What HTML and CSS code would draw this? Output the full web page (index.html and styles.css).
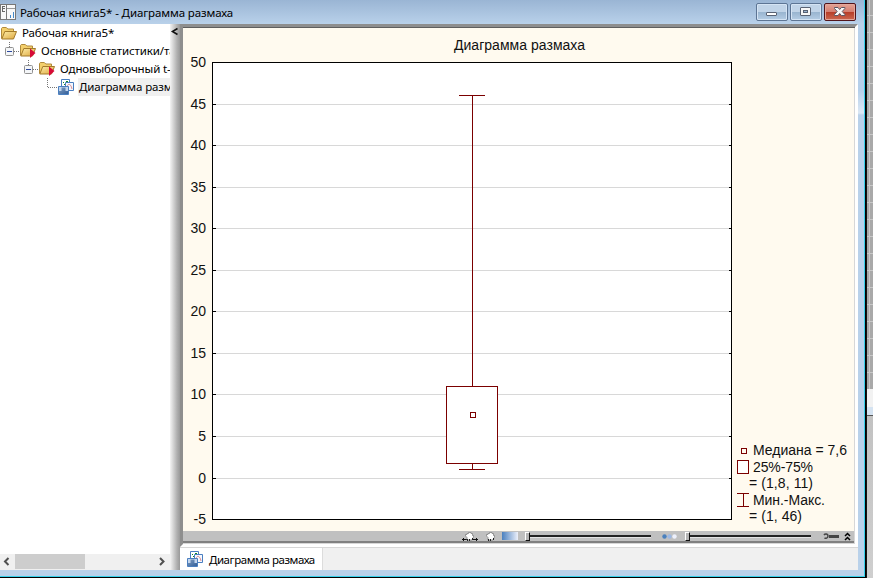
FILE: index.html
```
<!DOCTYPE html>
<html lang="ru">
<head>
<meta charset="utf-8">
<title>Рабочая книга5* - Диаграмма размаха</title>
<link rel="stylesheet" href="styles.css">
</head>
<body>
<svg class="defs" width="0" height="0">
  <defs>
    <linearGradient id="gold" x1="0" y1="0" x2="1" y2="1"><stop offset="0" stop-color="#fdeeaa"/><stop offset="1" stop-color="#dda63c"/></linearGradient>
    <linearGradient id="person" x1="0" y1="0" x2="1" y2="1"><stop offset="0" stop-color="#7f9cc0"/><stop offset="1" stop-color="#34619b"/></linearGradient>
    <symbol id="folder" viewBox="0 0 16 13">
      <path d="M.5 11.500V1.500l.8-1h4l1.500 1.500h5.700v3.500" fill="#f3cf6c" stroke="#b08a3c"/>
      <path d="M.8 12L3.800 4.500H15.500L12.500 12z" fill="url(#gold)" stroke="#a37a2a"/>
    </symbol>
    <symbol id="graph" viewBox="0 0 16 16">
      <path d="M3.500.500h8v8h-8z" fill="#fff" stroke="#4a7fc0"/>
      <path d="M5 3h1v1H5zM8 2h1v1H8zM6 5h1v1H6zM9 2h1v1H9zM7 4h1v1H7z" fill="#108a24"/>
      <path d="M7.500 3.500h8v8h-8z" fill="#f5f8ff" stroke="#4a7fc0"/>
      <path d="M9 9c0-5 4-5 5 1" fill="none" stroke="#d98c92"/>
      <path d="M.5 7.500h10v8H.5z" fill="#c3d6ee" stroke="#4a7fc0"/>
      <path d="M1 15v-3h2.500V8.500h4V12H10v3z" fill="url(#person)"/>
    </symbol>
    <symbol id="hand" viewBox="0 0 9 9">
      <path d="M2 8V5.500L.5 4V2.500H2V1.500h1.500V.5H6v1h1.500v2h1V5L7 8z" fill="#fff" stroke="#777" stroke-width=".7"/>
      <path d="M2 7h1v2H2zM4 7h1v2H4zM7 6h1v2H7z" fill="#222"/>
    </symbol>
    <symbol id="expander" viewBox="0 0 18 18">
      <path d="M5.500 0v5M10 9.500h8" stroke="#777" stroke-dasharray="1 1"/>
      <rect x="1.500" y="5.500" width="8" height="8" rx="1" fill="#f4f6f8" stroke="#919191"/>
      <path d="M3 9.500h5" stroke="#2d49a0"/>
    </symbol>
    <symbol id="opened" viewBox="0 0 16 16">
      <use href="#folder" width="16" height="13" y="1"/>
      <path d="M10 5.500l5.500 4.500L10 15z" fill="#d70a37"/>
    </symbol>
  </defs>
</svg>
<div class="desktop">
  <div class="window">
    <header class="titlebar">
      <svg class="app-icon" width="16" height="17" viewBox="0 0 16 17" shape-rendering="crispEdges">
        <path d="M.5.500h6v15h-6zM6.500.5h9v15h-9z" fill="#f8f8f8" stroke="#777"/>
        <path d="M2.500 2v6M2 2.500h3M2 4.500h3M2 7.500h3" stroke="#666"/><path d="M7 4.500h8" stroke="#999"/>
        <path d="M10.500 11v3M13.500 8v6" stroke="#4589c8"/>
      </svg>
      <span class="title">Рабочая книга5* - Диаграмма размаха</span>
      <div class="controls">
        <button class="ctl"><svg width="30" height="16" viewBox="0 0 30 16"><rect x="9.500" y="8.500" width="10" height="3" rx=".5" fill="#fff" stroke="#596273"/></svg></button>
        <button class="ctl"><svg width="30" height="16" viewBox="0 0 30 16"><rect x="9.500" y="3.500" width="10" height="8" rx=".5" fill="#f7f7f7" stroke="#596273"/><rect x="12.500" y="6.500" width="4" height="2" fill="#9ab5d2" stroke="#596273"/></svg></button>
        <button class="ctl close"><svg width="30" height="16" viewBox="0 0 30 16"><path d="M9.500 3.500h3.500l1.700 2 1.700-2h3.500v1l-2.700 3 2.700 3v1h-3.500l-1.700-2-1.700 2H9.500v-1l2.700-3-2.700-3z" fill="#f8f8f8" stroke="#5b5864"/></svg></button>
      </div>
    </header>
    <div class="body">
      <aside class="sidebar">
        <div class="tree">
          <div class="row"><svg class="ic" width="16" height="13"><use href="#folder"/></svg><span class="label">Рабочая книга5*</span></div>
          <div class="row l1"><svg width="18" height="18"><use href="#expander"/></svg><svg class="ic" width="16" height="16"><use href="#opened"/></svg><span class="label">Основные статистики/таблицы</span></div>
          <div class="row l2"><svg width="18" height="18"><use href="#expander"/></svg><svg class="ic" width="16" height="16"><use href="#opened"/></svg><span class="label">Одновыборочный t-критерий</span></div>
          <div class="row l3"><svg width="18" height="18" viewBox="0 0 18 18"><path d="M5.500 0v10M6 9.500h10" fill="none" stroke="#777" stroke-dasharray="1 1"/></svg><svg class="ic" width="16" height="16"><use href="#graph"/></svg><span class="label selected">Диаграмма размаха</span></div>
        </div>
        <div class="scroll">
          <svg width="15" height="15" viewBox="0 0 15 15"><path d="M8.500 4L5 7.500 8.500 11" fill="none" stroke="#505050" stroke-width="2"/></svg>
          <div class="thumb"></div>
          <svg class="next" width="15" height="15" viewBox="0 0 15 15"><path d="M5 4l3.500 3.500L5 11" fill="none" stroke="#505050" stroke-width="2"/></svg>
        </div>
      </aside>
      <div class="splitter"><svg width="10" height="14" viewBox="0 0 10 14"><path d="M7.500 4.500L2.500 7.500 7.500 10.500" fill="none" stroke="#111" stroke-width="1.600"/></svg></div>
      <main class="main">
        <section class="graph">
          <svg class="chart" width="671" height="503" viewBox="183 28 671 503" shape-rendering="crispEdges">
            <rect x="212.500" y="62.500" width="519" height="457" fill="#fff" stroke="#000"/>
            <path d="M216 104.500h513M216 145.500h513M216 187.500h513M216 228.500h513M216 270.500h513M216 311.500h513M216 353.500h513M216 394.500h513M216 436.500h513M216 478.500h513" stroke="#d8d8d8"/>
            <path d="M213 104.500h3M213 145.500h3M213 187.500h3M213 228.500h3M213 270.500h3M213 311.500h3M213 353.500h3M213 394.500h3M213 436.500h3M213 478.500h3M729 104.500h3M729 145.500h3M729 187.500h3M729 228.500h3M729 270.500h3M729 311.500h3M729 353.500h3M729 394.500h3M729 436.500h3M729 478.500h3" stroke="#000"/>
            <g fill="none" stroke="#7b0000">
              <path d="M459 95.500h26M472.500 95v291M472.500 463v6M459 469.500h26"/>
              <rect x="446.500" y="386.500" width="51" height="77" fill="#fff"/>
              <rect x="470.500" y="412.500" width="5" height="5" fill="#fff"/>
              <rect x="741.500" y="448.500" width="5" height="5"/>
              <rect x="737.500" y="460.500" width="11" height="13" fill="#fff"/>
              <path d="M737 493.500h12M743.500 493v13M737 506.500h12"/>
            </g>
            <text class="t" x="454" y="50" textLength="131">Диаграмма размаха</text>
            <g class="t axis">
              <text x="206" y="67">50</text><text x="206" y="109">45</text><text x="206" y="150">40</text><text x="206" y="192">35</text><text x="206" y="233">30</text><text x="206" y="275">25</text><text x="206" y="316">20</text><text x="206" y="358">15</text><text x="206" y="399">10</text><text x="206" y="441">5</text><text x="206" y="483">0</text><text x="206" y="524">-5</text>
            </g>
            <g class="t">
              <text x="753" y="455" textLength="94">Медиана = 7,6</text>
              <text x="753" y="472" textLength="60">25%-75%</text>
              <text x="749" y="488" textLength="64">= (1,8, 11)</text>
              <text x="753" y="505" textLength="72">Мин.-Макс.</text>
              <text x="749" y="521" textLength="53">= (1, 46)</text>
            </g>
          </svg>
          <div class="tools">
            <svg class="pan" width="16" height="9" viewBox="0 0 16 9"><path d="M0 7.500h5M11 7.500h5M1.500 6v3M14.500 6v3" stroke="#111"/><use href="#hand" x="3" width="9" height="9"/></svg>
            <svg class="grab" width="9" height="9"><use href="#hand"/></svg>
            <div class="ramp"></div>
            <div class="slider"><i></i></div>
            <svg class="dots" width="15" height="5" viewBox="0 0 15 5"><circle cx="2.500" cy="2.500" r="2.200" fill="#4a80bd"/><circle cx="7.500" cy="2.500" r="2.200" fill="#9cb8e4"/><circle cx="12.500" cy="2.500" r="2.200" fill="#edf0fb"/></svg>
            <div class="slider"><i></i></div>
            <svg class="wrench" width="17" height="7" viewBox="0 0 17 7"><path d="M1 2c1-1.500 4-1.500 4 1S2.500 5.500 1.500 5" fill="none" stroke="#444" stroke-width="1.500"/><path d="M6 3.500h10" stroke="#444" stroke-width="3"/></svg>
            <svg class="up" width="7" height="9" viewBox="0 0 7 9"><path d="M1 4l2.500-2.500L6 4M1 8l2.500-2.500L6 8" fill="none" stroke="#000" stroke-width="1.500"/></svg>
          </div>
        </section>
        <nav class="tabs"><div class="tab"><svg width="16" height="16"><use href="#graph"/></svg><span>Диаграмма размаха</span></div></nav>
      </main>
    </div>
  </div>
  <div class="outside"><div class="cells"></div><div class="band"></div><div class="rest"></div></div>
</div>
</body>
</html>
```
FILE: styles.css
```
* { box-sizing: border-box; }
body { margin: 0; overflow: hidden; font-family: "Noto Sans", sans-serif; font-size: 12px; color: #000; }
svg { display: block; flex: none; }
.defs { height: 0; }
.desktop { display: flex; width: 873px; height: 578px; }
.window { display: flex; flex-direction: column; width: 866px; height: 578px; background: linear-gradient(#9ab5d4, #b9d1ea 24px, #b5cfea 90px, #dce8f5 113px, #b9d1ea 115px); border-right: 1px solid #000; border-bottom: 1px solid #000; box-shadow: inset -1px -1px #35d0ea; }
.titlebar { display: flex; height: 24px; align-items: flex-start; background: linear-gradient(#9ab5d4, #b9d1ea); margin-right: 1px; }
.app-icon { margin-top: 4px; }
.title { margin-left: 4px; line-height: 26px; white-space: nowrap; font-size: 11.5px; letter-spacing: -.12px; }
.controls { display: flex; gap: 2px; margin: 3px 8px 0 auto; }
.ctl { width: 32px; height: 18px; padding: 0; border: 1px solid #5d7594; border-radius: 2px; background: linear-gradient(#c1d4e8 0 48%, #98b4cf 50%, #b5cde5); box-shadow: inset 0 0 0 1px #d5e4f4; }
.ctl.close { border-color: #51141b; background: linear-gradient(#e4a396, #d57e70 48%, #b63c27 50%, #cc6850); box-shadow: inset 0 0 0 1px #e3a79b; }
.body { display: flex; height: 546px; width: 858px; }
.sidebar { display: flex; flex-direction: column; width: 170px; background: #fff; overflow: hidden; }
.tree { flex: 1; font-size: 11.5px; letter-spacing: -.12px; }
.row { display: flex; align-items: center; height: 18px; white-space: nowrap; }
.row .ic { margin-left: 1px; }
.l1 { padding-left: 4px; }
.l2 { padding-left: 23px; }
.l3 { padding-left: 42px; }
.l1 .ic, .l2 .ic, .l3 .ic { margin-left: -2px; }
.label { margin-left: 5px; line-height: 18px; }
.selected { background: #f0f0f0; padding-left: 1px; margin-left: 4px; }
.scroll { display: flex; height: 16px; background: #f0f0f0; }
.thumb { width: 70px; height: 15px; background: #cdcdcd; }
.scroll .next { margin-left: auto; }
.splitter { width: 10px; background: linear-gradient(90deg, #f4f4f4, #b0b0b0 70%, #999); }
.main { display: flex; flex-direction: column; width: 678px; background: #f0f0f0; }
.graph { width: 678px; height: 523px; padding: 1px 1px 1px 0; border-style: solid; border-width: 3px 3px 3px 3px; border-color: #8e8e8e #fff #fff #8e8e8e; background: #fffaef; box-shadow: inset 0 1px #5f5f5f, inset -1px -1px #d7d7d7; }
.t { font-family: "Liberation Sans", Arial, sans-serif; font-size: 14px; fill: #111; }
.axis { text-anchor: end; }
.tools { display: flex; align-items: center; height: 12px; border-bottom: 2px solid #808080; background: #c0c0c0; }
.pan { margin-left: 279px; }
.grab { margin-left: 8px; }
.ramp { width: 16px; height: 8px; margin-left: 7px; background: linear-gradient(90deg, #4a80bf, #edf0fa); }
.slider { display: flex; align-items: center; width: 126px; height: 10px; margin-left: 7px; background: linear-gradient(transparent 4px, #222 4px 6px, #e4e4e4 6px 7px, transparent 7px); }
.slider i { width: 5px; height: 9px; background: #b4b4b4; border: 1px solid; border-color: #fff #111 #111 #fff; }
.dots { margin-left: 11px; }
.dots + .slider { margin-left: 8px; }
.wrench { margin-left: 12px; }
.up { margin-left: 4px; }
.tabs { display: flex; height: 23px; border-top: 1px solid #d7d7d7; }
.tab { display: flex; align-items: center; width: 143px; height: 22px; padding-left: 7px; background: #fff; border-right: 1px solid #dcdcdc; }
.tab span { margin-left: 6px; font-size: 11.5px; letter-spacing: -.45px; white-space: nowrap; }
.outside { width: 7px; display: flex; flex-direction: column; border-left: 1px solid #111; }
.cells { height: 389px; background: repeating-linear-gradient(transparent 0 15px, #c8c8c8 15px 16px, transparent 16px 17px), linear-gradient(90deg, transparent 2px, #c8c8c8 2px 3px, transparent 3px), #a9a9a9; }
.band { height: 27px; border-bottom: 1px solid #555; background: linear-gradient(#f2f2f2 18px, #d5e3f1 18px); }
.rest { flex: 1; background: linear-gradient(#c2c2c2, #cfcfcf); }
```
